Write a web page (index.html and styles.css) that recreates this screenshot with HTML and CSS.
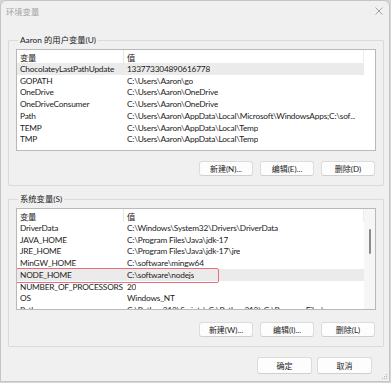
FILE: index.html
```html
<!DOCTYPE html>
<html lang="zh-CN">

<head>
    <meta charset="UTF-8">
    <meta name="viewport" content="width=device-width, initial-scale=1.0">
    <title>环境变量</title>
    <link rel="stylesheet" href="styles.css">
</head>

<body>

    <div class="window">
        <div class="titlebar">
            <span class="title">环境变量</span>
            <svg class="close" width="8" height="8" viewBox="0 0 8 8">
                <path d="M0.5 0.5 L7.5 7.5 M7.5 0.5 L0.5 7.5" stroke="#9a9a9a" stroke-width="0.9" fill="none" />
            </svg>
        </div>

        <div class="content">
            <fieldset class="group">
                <legend>Aaron 的用户变量(U)</legend>
                <div class="list">
                    <div class="list-main">
                        <div class="list-head">
                            <span class="col-name">变量</span>
                            <span class="col-value">值</span>
                        </div>
                        <div class="row selected"><span class="col-name">ChocolateyLastPathUpdate</span><span class="col-value">133773304890616778</span></div>
                        <div class="row"><span class="col-name">GOPATH</span><span class="col-value">C:\Users\Aaron\go</span></div>
                        <div class="row"><span class="col-name">OneDrive</span><span class="col-value">C:\Users\Aaron\OneDrive</span></div>
                        <div class="row"><span class="col-name">OneDriveConsumer</span><span class="col-value">C:\Users\Aaron\OneDrive</span></div>
                        <div class="row"><span class="col-name">Path</span><span class="col-value">C:\Users\Aaron\AppData\Local\Microsoft\WindowsApps;C:\sof...</span></div>
                        <div class="row"><span class="col-name">TEMP</span><span class="col-value">C:\Users\Aaron\AppData\Local\Temp</span></div>
                        <div class="row"><span class="col-name">TMP</span><span class="col-value">C:\Users\Aaron\AppData\Local\Temp</span></div>
                    </div>
                    <div class="scroll-space"></div>
                </div>
                <div class="buttons">
                    <button class="btn">新建(N)...</button>
                    <button class="btn">编辑(E)...</button>
                    <button class="btn">删除(D)</button>
                </div>
            </fieldset>

            <fieldset class="group group-system">
                <legend>系统变量(S)</legend>
                <div class="list">
                    <div class="list-main">
                        <div class="list-head">
                            <span class="col-name">变量</span>
                            <span class="col-value">值</span>
                        </div>
                        <div class="row"><span class="col-name">DriverData</span><span class="col-value">C:\Windows\System32\Drivers\DriverData</span></div>
                        <div class="row"><span class="col-name">JAVA_HOME</span><span class="col-value">C:\Program Files\Java\jdk-17</span></div>
                        <div class="row"><span class="col-name">JRE_HOME</span><span class="col-value">C:\Program Files\Java\jdk-17\jre</span></div>
                        <div class="row"><span class="col-name">MinGW_HOME</span><span class="col-value">C:\software\mingw64</span></div>
                        <div class="row selected marked"><span class="col-name">NODE_HOME</span><span class="col-value">C:\software\nodejs</span><span class="mark"></span></div>
                        <div class="row"><span class="col-name">NUMBER_OF_PROCESSORS</span><span class="col-value">20</span></div>
                        <div class="row"><span class="col-name">OS</span><span class="col-value">Windows_NT</span></div>
                        <div class="row"><span class="col-name">Path</span><span class="col-value">C:\Python312\Scripts\;C:\Python312\;C:\Program Files\...</span></div>
                    </div>
                    <div class="scrollbar">
                        <div class="thumb"></div>
                    </div>
                </div>
                <div class="buttons">
                    <button class="btn">新建(W)...</button>
                    <button class="btn">编辑(I)...</button>
                    <button class="btn">删除(L)</button>
                </div>
            </fieldset>

            <div class="dialog-buttons">
                <button class="btn btn-large">确定</button>
                <button class="btn btn-large">取消</button>
            </div>
        </div>

        <svg class="grip" width="6" height="6" viewBox="0 0 6 6">
            <rect x="4" y="0" width="1" height="1" fill="#b0b0b0" />
            <rect x="2" y="2" width="1" height="1" fill="#b0b0b0" />
            <rect x="4" y="2" width="1" height="1" fill="#b0b0b0" />
            <rect x="0" y="4" width="1" height="1" fill="#b0b0b0" />
            <rect x="2" y="4" width="1" height="1" fill="#b0b0b0" />
            <rect x="4" y="4" width="1" height="1" fill="#b0b0b0" />
        </svg>
    </div>

</body>

</html>
```

FILE: styles.css
```css
body {
    margin: 0;
    background-color: #d6d6d6;
    font-family: "Segoe UI", Lato, "Noto Sans CJK SC", sans-serif;
    font-size: 8.3px;
    color: #222;
}

.window {
    position: relative;
    width: 388px;
    height: 380px;
    background-color: #f0f0f0;
    border: 1px solid #c4c4c4;
    border-radius: 6px 6px 0 0;
}

.titlebar {
    height: 19px;
    display: flex;
    align-items: center;
    justify-content: space-between;
    padding: 0 6px 0 5px;
}

.title {
    color: #a3a3a3;
    font-size: 8.3px;
}

.close {
    display: block;
}

.content {
    padding: 14px 5px 0 7px;
}

.group {
    margin: 0;
    padding: 3px 7px 9px 7px;
    border: 1px solid #dadada;
    border-radius: 1px;
}

.group legend {
    padding: 0 2px;
    margin-left: 2px;
    line-height: 12px;
}

.group-system {
    margin-top: 7px;
}

.list {
    display: flex;
    height: 100px;
    background-color: #fff;
    border: 1px solid #b9b9b9;
    overflow: hidden;
    letter-spacing: -0.2px;
}

.list-main {
    flex: 1;
    min-width: 0;
}

.list-head {
    display: flex;
    height: 13px;
    align-items: center;
    border-right: 1px solid #ececec;
}

.list-head .col-name {
    align-self: stretch;
    display: flex;
    align-items: center;
    border-right: 1px solid #e6e6e6;
}

.row {
    position: relative;
    display: flex;
    height: 11.75px;
    align-items: center;
    white-space: nowrap;
}

.col-name {
    width: 107px;
    flex: none;
    box-sizing: border-box;
    padding-left: 3px;
}

.col-value {
    padding-left: 3px;
    overflow: hidden;
}

.selected {
    background-color: #ebebeb;
}

.mark {
    position: absolute;
    left: -4px;
    top: -1px;
    width: 204px;
    height: 13px;
    border: 1px solid #e8707c;
    border-radius: 2px;
}

.scroll-space {
    width: 11px;
}

.scrollbar {
    width: 11px;
    background-color: #f6f6f6;
    position: relative;
}

.thumb {
    width: 2px;
    height: 25px;
    margin: 20px 0 0 5px;
    border-radius: 1px;
    background-color: #8b8b8b;
}

.buttons {
    display: flex;
    justify-content: flex-end;
    gap: 7px;
    margin-top: 10px;
    padding-right: 1px;
}

.btn {
    width: 54px;
    height: 15px;
    padding: 0;
    font-family: inherit;
    font-size: 8px;
    color: #222;
    background-color: #fdfdfd;
    border: 1px solid #dcdcdc;
    border-bottom-color: #cfcfcf;
    border-radius: 3px;
}

.group-system .buttons {
    margin-top: 12px;
}

.dialog-buttons {
    display: flex;
    justify-content: flex-end;
    gap: 5px;
    margin-top: 10px;
    padding-right: 12px;
}

.btn-large {
    width: 55px;
    height: 17px;
}

.grip {
    position: absolute;
    right: 1px;
    bottom: 1px;
}
```
